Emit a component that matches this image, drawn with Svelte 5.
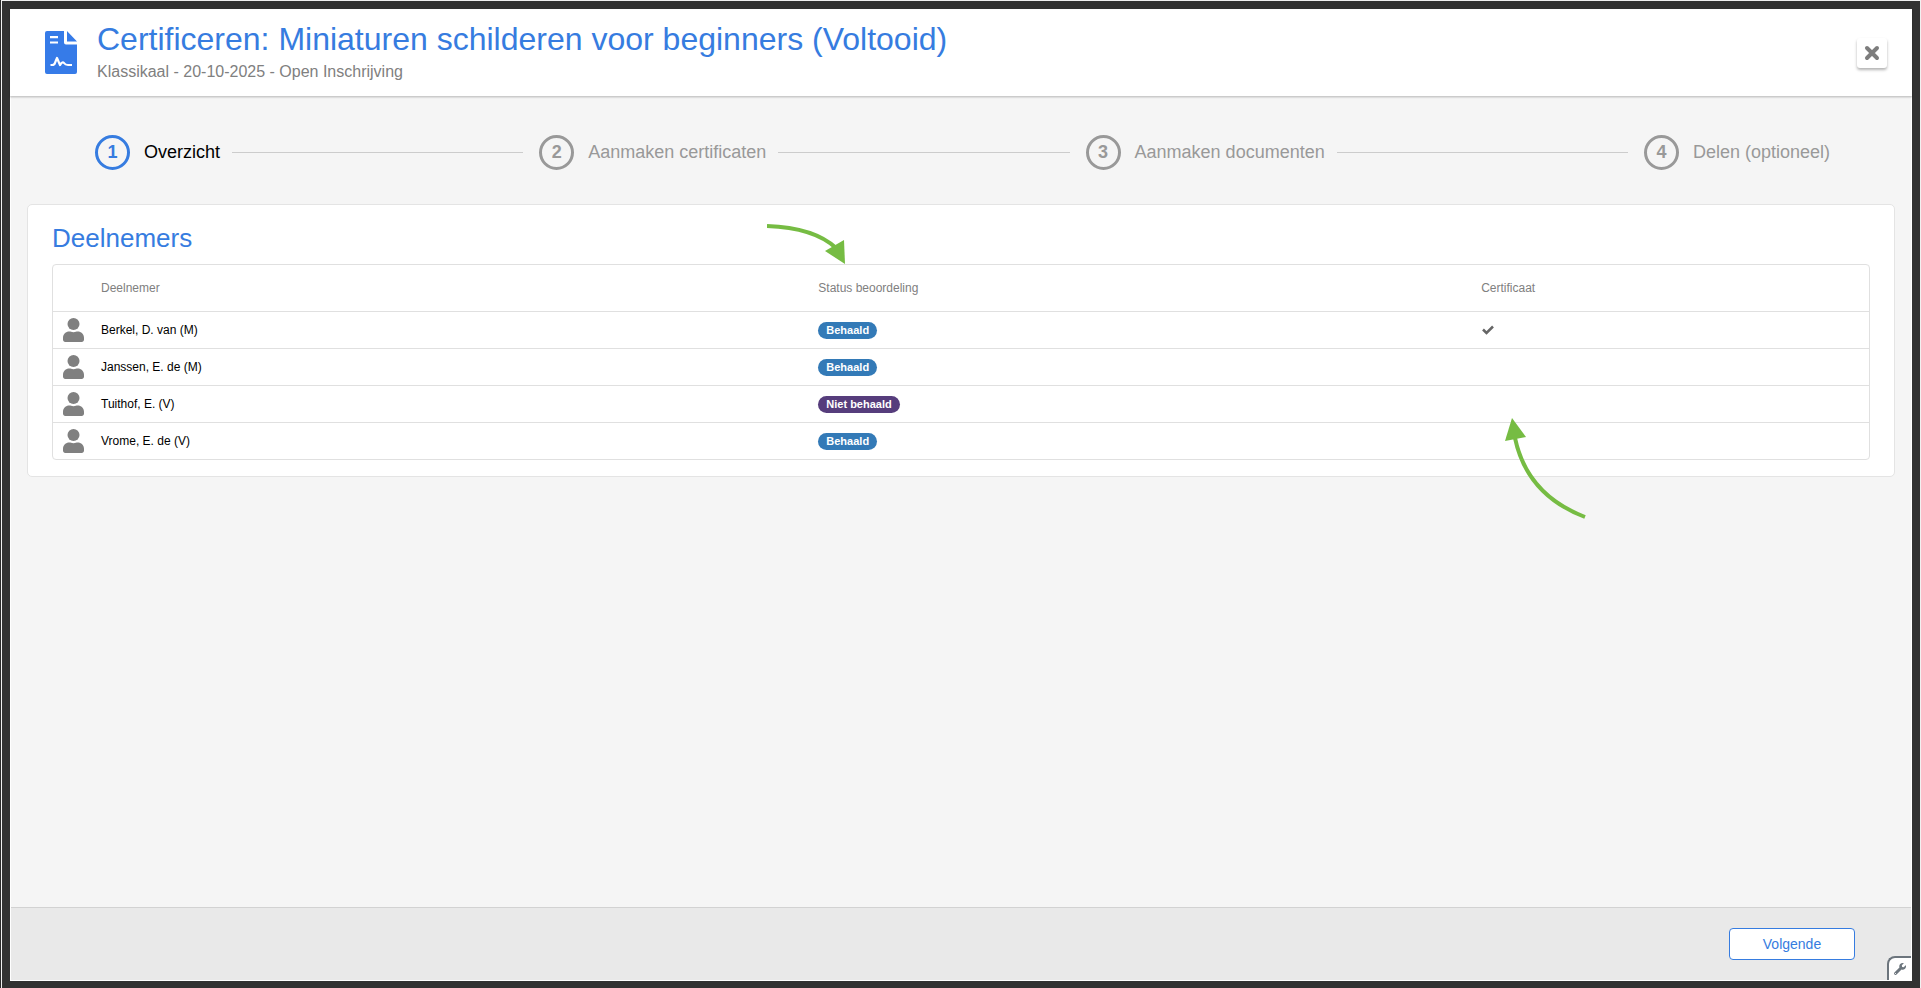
<script lang="ts">
  interface Participant {
    name: string
    passed: boolean
    certificate: boolean
  }

  const steps = [
    'Overzicht',
    'Aanmaken certificaten',
    'Aanmaken documenten',
    'Delen (optioneel)'
  ]

  const participants: Participant[] = [
    { name: 'Berkel, D. van (M)', passed: true, certificate: true },
    { name: 'Janssen, E. de (M)', passed: true, certificate: false },
    { name: 'Tuithof, E. (V)', passed: false, certificate: false },
    { name: 'Vrome, E. de (V)', passed: true, certificate: false }
  ]

  let current = $state(0)

  function next() {
    if (current < steps.length - 1) current += 1
  }
</script>

<div class="backdrop">
  <div class="dialog">
    <header class="header">
      <svg class="header-icon" viewBox="0 0 32 43" aria-hidden="true">
        <path
          fill="currentColor"
          d="M19 0H2Q0 0 0 2v39q0 2 2 2h28q2 0 2-2V13.500H21q-2 0-2-2zM22 0v10.500h10z"
        />
        <path
          d="M5 6.200h8M5 11.500h8M5.500 34h2.500l1.500-1 2.500-6 3 7c1.500-2 2.500-3.500 4-2 1 1.500 2 2 4 2h4"
          fill="none"
          stroke="#fff"
          stroke-width="2.200"
          stroke-linejoin="round"
        />
      </svg>
      <div class="header-text">
        <h1>Certificeren: Miniaturen schilderen voor beginners (Voltooid)</h1>
        <p>Klassikaal - 20-10-2025 - Open Inschrijving</p>
      </div>
      <button class="close" type="button" aria-label="Sluiten">
        <svg viewBox="0 0 16 16" aria-hidden="true">
          <path d="M3 3l10 10M13 3L3 13" />
        </svg>
      </button>
    </header>

    <main class="content">
      <ol class="stepper">
        {#each steps as step, i}
          {#if i > 0}
            <li class="line" aria-hidden="true"></li>
          {/if}
          <li class="step" class:active={i === current}>
            <span class="number">{i + 1}</span>
            <span class="label">{step}</span>
          </li>
        {/each}
      </ol>

      <section class="card">
        <h2>Deelnemers</h2>
        <div class="table-frame">
          <table>
            <colgroup>
              <col class="col-icon" />
              <col class="col-name" />
              <col class="col-status" />
              <col />
            </colgroup>
            <thead>
              <tr>
                <th></th>
                <th>Deelnemer</th>
                <th>Status beoordeling</th>
                <th>Certificaat</th>
              </tr>
            </thead>
            <tbody>
              {#each participants as p}
                <tr>
                  <td class="person">
                    <svg viewBox="0 0 21 24" aria-hidden="true">
                      <circle cx="10.5" cy="6" r="6" />
                      <path d="M0 21v-1.200C0 16 2.800 13.500 6.300 13.500c1.500 0 2 .7 4.200.7s2.700-.7 4.200-.7C18.200 13.500 21 16 21 19.800V21.800C21 23 20 24 18.800 24H2.200C1 24 0 23 0 21.800z" />
                    </svg>
                  </td>
                  <td>{p.name}</td>
                  <td>
                    <span class="badge" class:failed={!p.passed}>
                      {p.passed ? 'Behaald' : 'Niet behaald'}
                    </span>
                  </td>
                  <td>
                    {#if p.certificate}
                      <svg class="check" viewBox="0 0 14 12" role="img" aria-label="Ja">
                        <path d="M2 5.500L5.500 9 12 2.500" />
                      </svg>
                    {/if}
                  </td>
                </tr>
              {/each}
            </tbody>
          </table>
        </div>

        <svg class="arrow arrow--status" viewBox="0 0 80 44" aria-hidden="true">
          <path class="shaft" d="M0 3C27 4 53 10 69 25" />
          <path class="head" d="M77 17L58 28l20 13z" />
        </svg>
        <svg class="arrow arrow--certificate" viewBox="0 0 84 102" aria-hidden="true">
          <path class="shaft" d="M12 20C20 58 43 84 82 99" />
          <path class="head" d="M9 0L2 23l21-4z" />
        </svg>
      </section>
    </main>

    <footer class="footer">
      <button class="next" type="button" onclick={next}>Volgende</button>
      <button class="tools" type="button" aria-label="Hulpmiddelen">
        <svg viewBox="0 0 512 512" aria-hidden="true">
          <path
            d="M508 109c-2-9-14-12-20-5l-75 74-67-11-12-68 75-74c6-7 3-18-6-21-48-11-100 1-137 39-40 40-51 98-35 148L19 403a64 64 0 0 0 90 90l212-212c50 17 108 6 149-35 38-38 50-90 38-137zM64 472a24 24 0 1 1 0-48 24 24 0 0 1 0 48z"
          />
        </svg>
      </button>
    </footer>
  </div>
</div>

<style>
  :global(body) {
    margin: 0;
    background: #e4e8e6;
  }

  .backdrop {
    box-sizing: border-box;
    height: 100vh;
    padding: 1px 1px 0 2px;
    font-family: 'Liberation Sans', Arial, sans-serif;
    color: #000;
    background: linear-gradient(to right, #2c2c2c 1px, #f1f1f1 1px);
  }

  .dialog {
    box-sizing: border-box;
    height: 100%;
    display: flex;
    flex-direction: column;
    border: 8px solid #323232;
    border-bottom-width: 7px;
    background: #fff;
  }

  .header {
    position: relative;
    display: flex;
    align-items: center;
    height: 87px;
    padding: 0 25px 0 35px;
    box-shadow: 0 1px 2px rgba(0, 0, 0, 0.3);
  }

  .header-icon {
    width: 32px;
    height: 43px;
    color: #367be8;
  }

  .header-text {
    flex: 1;
    margin-left: 20px;
  }

  h1 {
    margin: 0 0 1px;
    font-size: 32px;
    line-height: 38px;
    font-weight: 400;
    color: #367ce0;
  }

  p {
    margin: 0;
    font-size: 16px;
    line-height: 26px;
    color: #808080;
  }

  .close {
    display: flex;
    align-items: center;
    justify-content: center;
    width: 30px;
    height: 30px;
    padding: 0;
    border: 0;
    border-radius: 3px;
    background: #fff;
    box-shadow: 0 2px 3px rgba(0, 0, 0, 0.3);
  }

  .close svg {
    width: 16px;
    height: 16px;
    fill: none;
    stroke: #7d7d7d;
    stroke-width: 4;
    stroke-linecap: round;
  }

  .content {
    flex: 1;
    margin: 1px 1px 0;
    padding: 37px 16px 0;
    background: #f5f5f5;
  }

  .stepper {
    display: flex;
    align-items: center;
    margin: 0 65px 0 68px;
    padding: 0;
    list-style: none;
  }

  .step {
    display: flex;
    align-items: center;
    gap: 14px;
    font-size: 18px;
    line-height: 36px;
    color: #999;
    white-space: nowrap;
  }

  .number {
    box-sizing: border-box;
    width: 35px;
    height: 35px;
    border: 3px solid #999;
    border-radius: 50%;
    font-weight: 700;
    line-height: 29px;
    text-align: center;
  }

  .step.active {
    color: #000;
  }

  .step.active .number {
    border-color: #367ce0;
    color: #367ce0;
  }

  .line {
    flex: 1;
    height: 1px;
    margin: 0 16px 0 12px;
    background: #ccc;
  }

  .card {
    position: relative;
    margin-top: 34px;
    padding: 16px 24px;
    border: 1px solid #e4e4e4;
    border-radius: 5px;
    background: #fff;
  }

  h2 {
    margin: 0;
    font-size: 26px;
    line-height: 34px;
    font-weight: 400;
    color: #367ce0;
  }

  .table-frame {
    margin-top: 9px;
    border: 1px solid #e0e0e0;
    border-radius: 4px;
  }

  table {
    width: 100%;
    border-spacing: 0;
    table-layout: fixed;
    font-size: 12px;
    line-height: 16px;
  }

  .col-icon {
    width: 40px;
  }

  .col-name {
    width: 39.5%;
  }

  .col-status {
    width: 36.5%;
  }

  th {
    height: 46px;
    padding: 0 8px;
    font-weight: 400;
    text-align: left;
    color: #808080;
  }

  td {
    height: 36px;
    padding: 0 8px;
    border-top: 1px solid #e0e0e0;
  }

  .person {
    padding: 0 0 0 10px;
  }

  .person svg {
    display: block;
    width: 21px;
    height: 24px;
    fill: #808080;
  }

  .badge {
    display: inline-block;
    padding: 0 8px;
    border-radius: 9px;
    background: #337ab7;
    color: #fff;
    font-size: 11px;
    line-height: 17px;
    font-weight: 700;
  }

  .badge.failed {
    background: #563d7c;
  }

  .check {
    display: block;
    width: 14px;
    height: 12px;
    fill: none;
    stroke: #666;
    stroke-width: 2.500;
  }

  .arrow {
    position: absolute;
  }

  .arrow--status {
    top: 18px;
    left: 739px;
    width: 80px;
    height: 44px;
  }

  .arrow--certificate {
    top: 213px;
    left: 1475px;
    width: 84px;
    height: 102px;
  }

  .shaft {
    fill: none;
    stroke: #76bc43;
    stroke-width: 4;
  }

  .head {
    fill: #76bc43;
  }

  .footer {
    position: relative;
    display: flex;
    align-items: center;
    justify-content: flex-end;
    height: 72px;
    margin: 0 1px 1px;
    padding-right: 56px;
    border-top: 1px solid #d2d2d2;
    background: #e9e9e9;
  }

  .next {
    width: 126px;
    height: 32px;
    border: 1px solid #367ce0;
    border-radius: 4px;
    background: #fff;
    color: #367ce0;
    font-family: inherit;
    font-size: 14px;
  }

  .tools {
    position: absolute;
    right: 0;
    bottom: 0;
    display: flex;
    align-items: center;
    justify-content: center;
    width: 24px;
    height: 24px;
    padding: 0;
    border: 2px solid #6c757d;
    border-width: 2px 0 0 2px;
    border-radius: 8px 0 0 0;
    background: #fff;
  }

  .tools svg {
    width: 12px;
    height: 12px;
    fill: #6c757d;
  }
</style>
